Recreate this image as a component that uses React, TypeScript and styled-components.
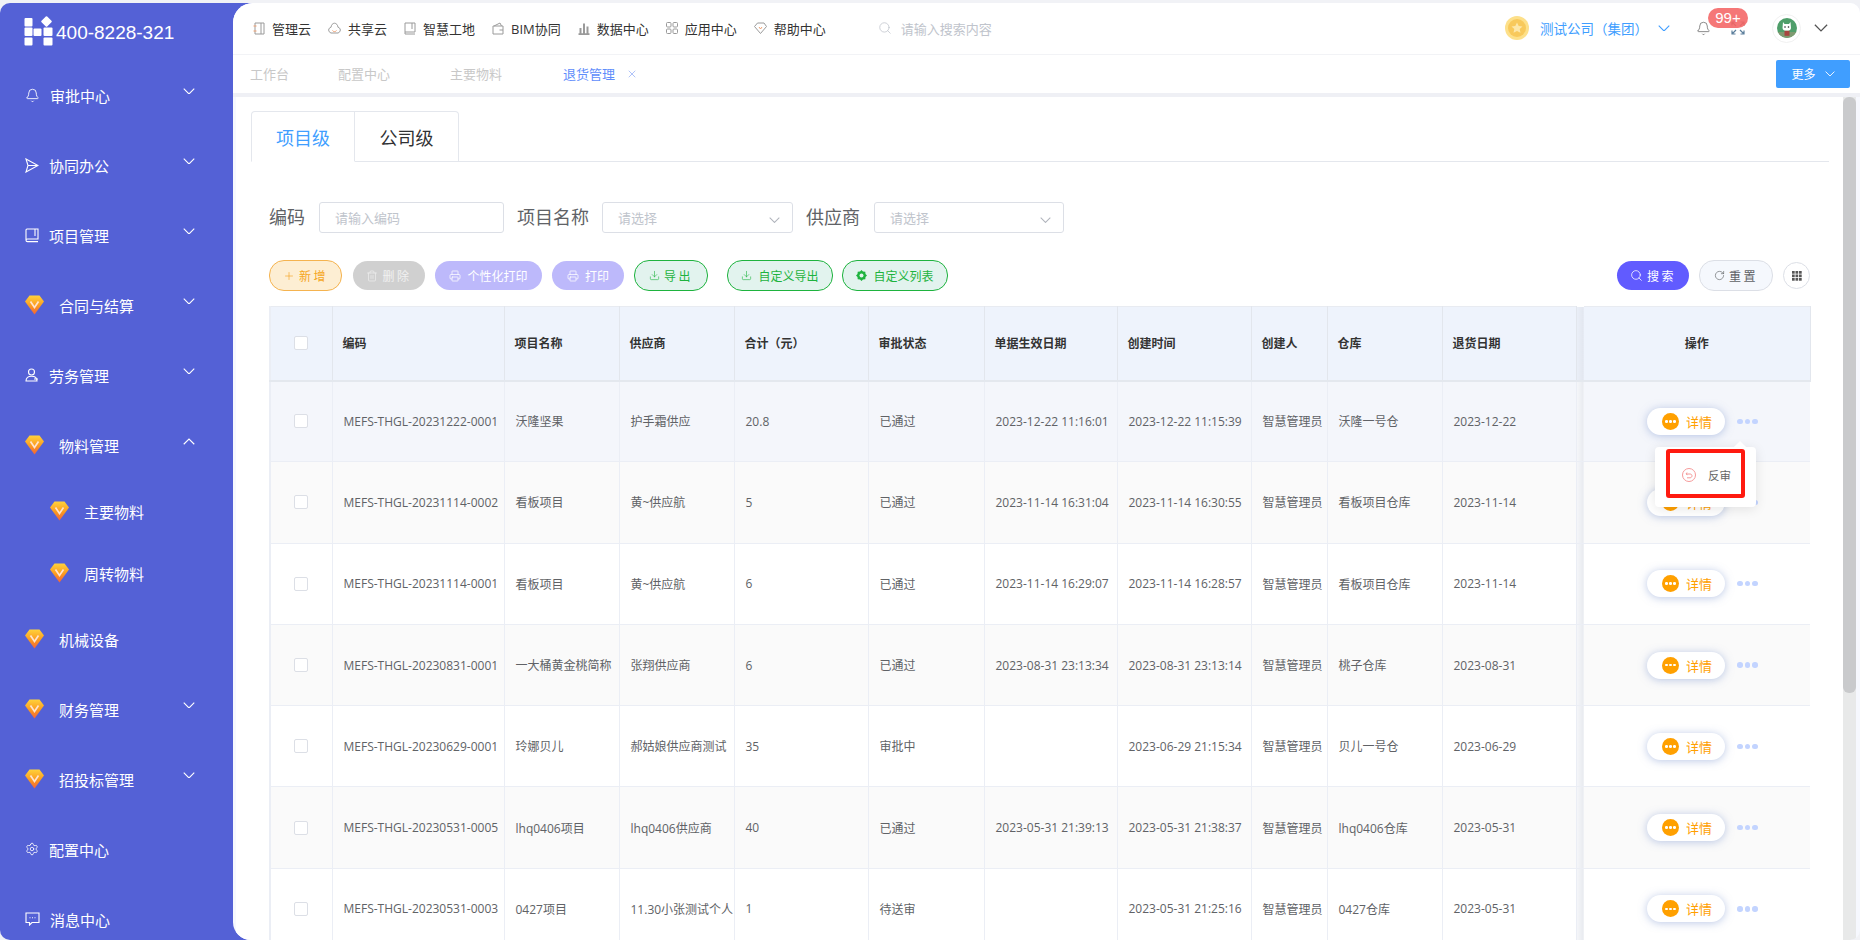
import React from 'react';
import styled, { createGlobalStyle } from 'styled-components';
import { Bell, Settings, Search, RotateCw, Printer, Trash2, Plus, Download, X } from 'lucide-react';

const FONT = '"Open Sans", "Noto Sans CJK SC", sans-serif';

const GlobalStyle = createGlobalStyle`
  html, body {
    margin: 0;
    padding: 0;
    height: 100%;
    overflow: hidden;
    background: #f1f2f6;
    font-family: ${FONT};
  }
  * { box-sizing: border-box; }
`;

const Shell = styled.div`
  width: 1860px;
  height: 937px;
  margin-top: 3px;
  display: flex;
  overflow: hidden;
  border-radius: 10px 0 0 10px;
  background: linear-gradient(90deg, #5461d6 260px, #f1f2f6 260px);
`;

/* sidebar */
const Sidebar = styled.aside`
  width: 233px;
  flex: none;
  color: #fff;
`;

const LogoBar = styled.div`
  height: 57px;
  display: flex;
  align-items: flex-start;
  padding: 13px 0 0 24px;
  gap: 3px;
`;

const Phone = styled.div`
  font-family: "Liberation Sans", sans-serif;
  font-size: 19px;
  line-height: 30px;
  margin-top: 2px;
  color: #fff;
`;

const MenuItem = styled.div<{ $sub?: boolean; $gem?: boolean }>`
  height: ${(p) => (p.$sub ? 62 : 70)}px;
  display: flex;
  align-items: center;
  font-size: 15px;
  padding-left: ${(p) => (p.$sub ? 50 : 25)}px;
  gap: ${(p) => (p.$gem ? 15 : 10)}px;
`;

const MenuLabel = styled.span`
  flex: 1;
`;

const MenuChevron = styled.span`
  display: flex;
  width: 12px;
  margin-right: 38px;
  margin-top: -8px;
`;

const ChevronSvg = styled.svg<{ $up?: boolean }>`
  display: block;
  transform: ${(p) => (p.$up ? 'rotate(180deg)' : 'none')};
`;

const Chevron = ({ up, size = 12, color = '#fff' }: { up?: boolean; size?: number; color?: string }) => (
  <ChevronSvg $up={up} width={size} height={size * 0.58} viewBox="0 0 12 7" fill="none" stroke={color} strokeWidth="1.1">
    <polyline points="0.7,0.7 6,6 11.3,0.7" />
  </ChevronSvg>
);

const Gem = () => {
  const id = React.useId();
  return (
    <svg width="19" height="20" viewBox="0 0 19 20">
      <defs>
        <linearGradient id={id} x1="0" y1="0" x2="0" y2="1">
          <stop offset="0" stopColor="#ffd23c" />
          <stop offset="0.55" stopColor="#fb9a1f" />
          <stop offset="1" stopColor="#f2623b" />
        </linearGradient>
      </defs>
      <path d="M4.5 0.5H14.5L19 6.5L9.5 19.5L0 6.5Z" fill={`url(#${id})`} />
      <polyline points="5.5,6.5 9.5,12.5 13.5,6.5" fill="none" stroke="#ffe3cf" strokeWidth="1.7" />
    </svg>
  );
};

const PlaneIcon = () => (
  <svg width="14" height="15" viewBox="0 0 14 15" fill="none" stroke="#fff" strokeWidth="1.1">
    <path d="M1 1L13 7.5L1 14L3 7.5ZM3 7.5H13" />
  </svg>
);

const BookIcon = () => (
  <svg width="14" height="15" viewBox="0 0 14 15" fill="none" stroke="#fff" strokeWidth="1.1">
    <path d="M1 12V2C1 1.4 1.4 1 2 1H13V11H2.5C1.6 11 1 11.5 1 12.3S1.6 13.6 2.5 13.6H13M10 1V8" />
  </svg>
);

const ChatIcon = () => (
  <svg width="15" height="14" viewBox="0 0 15 14" fill="none" stroke="#fff" strokeWidth="1.1">
    <path d="M1 1H14V10.5H7L4.5 13V10.5H1Z" />
    <path d="M4.5 5.8H5.5M7 5.8H8M9.5 5.8H10.5" />
  </svg>
);

const Logo = () => (
  <svg width="29" height="30" viewBox="0 0 29 30" fill="#fff">
    <rect x="0.5" y="2" width="8" height="8.5" rx="1" />
    <rect x="18.5" y="1.5" width="8" height="8" rx="1" transform="rotate(45 22.5 5.5)" />
    <rect x="0.5" y="11.5" width="8" height="8.5" rx="1" />
    <rect x="9.5" y="12.5" width="8" height="7.5" rx="1" />
    <rect x="19.5" y="11.5" width="9" height="8.5" rx="1" />
    <rect x="0.5" y="21.5" width="8" height="8" rx="1" />
    <rect x="19.5" y="21.5" width="9" height="8" rx="1" />
  </svg>
);

/* main panel */
const Main = styled.main`
  flex: 1;
  min-width: 0;
  display: flex;
  flex-direction: column;
  overflow: hidden;
  border-radius: 20px 10px 10px 18px;
  background: #f6f8fe;
`;

const Header = styled.header`
  height: 52px;
  flex: none;
  display: flex;
  align-items: center;
  background: #fff;
  border-bottom: 1px solid #f2f3f6;
  padding: 0 32px 1px 20px;
`;

const NavLink = styled.div`
  display: flex;
  align-items: center;
  gap: 7px;
  margin-right: 17px;
  font-size: 13px;
  color: #333;
  white-space: nowrap;
`;

const HeaderSearch = styled.div`
  display: flex;
  align-items: center;
  gap: 9px;
  margin-left: 35px;
  font-size: 13px;
  color: #c0c4cc;
`;

const HeaderRight = styled.div`
  margin-left: auto;
  display: flex;
  align-items: center;
`;

const Company = styled.div`
  display: flex;
  align-items: center;
  font-size: 13.5px;
  color: #409eff;
  gap: 11px;
  text-spacing-trim: space-all;
`;

const CompanyChevron = styled.span`
  margin-left: -1px;
  margin-right: 26px;
  display: flex;
`;

const BellWrap = styled.div`
  width: 76px;
  height: 24px;
  position: relative;
  display: flex;
  align-items: center;
  justify-content: space-between;
  padding-right: 27px;
`;

const Badge = styled.span`
  position: absolute;
  left: 12px;
  top: -8px;
  width: 40px;
  height: 20px;
  border-radius: 10px;
  background: #f56c6c;
  color: #fff;
  font-family: "Liberation Sans", sans-serif;
  font-size: 15px;
  line-height: 20px;
  text-align: center;
  opacity: 0.92;
`;

const Avatar = styled.div`
  width: 29px;
  height: 29px;
  border-radius: 50%;
  border: 1px solid #f0f0f0;
  display: flex;
  align-items: center;
  justify-content: center;
  margin-right: 13px;
`;

const TabBar = styled.div`
  height: 42px;
  flex: none;
  display: flex;
  align-items: center;
  background: #fff;
  border-bottom: 4px solid #eff0f5;
  padding: 0 10px 0 17px;
  font-size: 13px;
  color: #c8c8c8;
`;

const Crumb = styled.span<{ $active?: boolean; $w: number }>`
  width: ${(p) => p.$w}px;
  margin-top: -2px;
  color: ${(p) => (p.$active ? '#5f8dfb' : '#c8c8c8')};
  white-space: nowrap;
`;

const CloseWrap = styled.span`
  display: flex;
  margin-left: -3px;
  margin-top: -1px;
`;

const MoreButton = styled.button`
  margin-left: auto;
  width: 74px;
  height: 28px;
  border: none;
  border-radius: 2px;
  background: #409eff;
  color: #fff;
  font-family: ${FONT};
  font-size: 12px;
  display: flex;
  align-items: center;
  justify-content: center;
  gap: 9px;
`;

const Body = styled.div`
  flex: 1;
  min-height: 0;
  display: flex;
  padding-right: 4px;
`;

const Content = styled.div`
  flex: 1;
  min-width: 0;
  margin-left: 3px;
  background: #fff;
  padding: 14px 14px 0 15px;
  overflow: hidden;
`;

const Scrollbar = styled.div`
  width: 13px;
  flex: none;
  background: #e8e9e9;
`;

const ScrollThumb = styled.div`
  height: 596px;
  background: #c9cacc;
  border-radius: 6px;
`;

const TabsHead = styled.div`
  height: 51px;
  display: flex;
  border-bottom: 1px solid #e4e7ed;
`;

const Tab = styled.div<{ $active?: boolean }>`
  width: 104px;
  height: 51px;
  display: flex;
  align-items: center;
  justify-content: center;
  font-size: 18px;
  color: ${(p) => (p.$active ? '#409eff' : '#303133')};
  border: 1px solid #e4e7ed;
  border-left-width: ${(p) => (p.$active ? 1 : 0)}px;
  border-bottom-color: ${(p) => (p.$active ? '#fff' : '#e4e7ed')};
  border-radius: ${(p) => (p.$active ? '4px 0 0 0' : '0 4px 0 0')};
`;

const FilterRow = styled.div`
  display: flex;
  align-items: center;
  height: 31px;
  margin: 40px 0 0 18px;
`;

const FilterLabel = styled.label<{ $gap: number }>`
  font-size: 18px;
  color: #606266;
  margin-right: ${(p) => p.$gap}px;
  margin-top: -3px;
  white-space: nowrap;
`;

const Field = styled.div<{ $w: number; $gap: number }>`
  width: ${(p) => p.$w}px;
  height: 31px;
  margin-right: ${(p) => p.$gap}px;
  border: 1px solid #dcdfe6;
  border-radius: 3px;
  display: flex;
  align-items: center;
  justify-content: space-between;
  padding: 0 12px 1px 15px;
  font-size: 13px;
  color: #c0c4cc;
`;

const FieldChevron = styled.span`
  display: flex;
  margin-top: 6px;
`;

const ActionRow = styled.div`
  display: flex;
  align-items: center;
  height: 31px;
  margin: 27px 19px 0 18px;
`;

const SKINS: Record<string, string> = {
  orange: 'background:#fdeed3;border:1px solid #f5b34f;color:#f5a623;',
  gray: 'background:#d0d0d0;color:#f1f1f1;height:29px;',
  violet: 'background:#bdb9fb;color:#fff;height:29px;',
  green: 'background:#e2f3ee;border:1px solid #1eb33e;color:#1eb33e;',
  blue: 'background:#615bff;color:#fff;height:29px;',
  plain: 'background:#f5f8fd;border:1px solid #dcdfe6;color:#606266;',
};

const PillButton = styled.button<{ $skin: string; $w: number; $gap: number; $spaced?: boolean }>`
  width: ${(p) => p.$w}px;
  height: 31px;
  flex: none;
  margin-right: ${(p) => p.$gap}px;
  padding: 0;
  border: none;
  border-radius: 15px;
  font-family: ${FONT};
  font-size: 12px;
  letter-spacing: ${(p) => (p.$spaced ? 2.5 : 0)}px;
  display: flex;
  align-items: center;
  justify-content: center;
  gap: ${(p) => (p.$spaced ? 4 : 6)}px;
  ${(p) => SKINS[p.$skin]}
`;

const Spacer = styled.div`
  flex: 1;
`;

const GridButton = styled.button`
  width: 27px;
  height: 27px;
  flex: none;
  padding: 0;
  border: 1px solid #dcdfe6;
  border-radius: 50%;
  background: #fff;
  display: flex;
  align-items: center;
  justify-content: center;
`;

/* table */
const TableWrap = styled.div`
  margin: 15px 33px 0 18px;
`;

const Table = styled.table`
  width: 1540px;
  table-layout: fixed;
  border-collapse: collapse;
  font-size: 12px;
  color: #606266;
  border-left: 2px solid #ebeef5;
  text-spacing-trim: space-all;
`;

const Th = styled.th<{ $center?: boolean }>`
  height: 74px;
  background: #eef3fc;
  color: #333;
  font-weight: 700;
  text-align: ${(p) => (p.$center ? 'center' : 'left')};
  padding: 0 ${(p) => (p.$center ? 0 : 10)}px;
  border-top: 1px solid #e8ebf1;
  border-right: 1px solid #e2e6ed;
  border-bottom: 2px solid #e4e8ee;
  white-space: nowrap;
`;

const Row = styled.tr<{ $tone: string }>`
  height: 81.3px;
  background: ${(p) => p.$tone};
`;

const Td = styled.td`
  padding: 0 0 0 11px;
  border-right: 1px solid #ebeef5;
  border-bottom: 1px solid #ebeef5;
  white-space: nowrap;
  overflow: hidden;
`;

const CheckCell = styled.td`
  padding: 0;
  border-right: 1px solid #ebeef5;
  border-bottom: 1px solid #ebeef5;
`;

const CheckHead = styled(Th)`
  padding: 0;
`;

const Box = styled.span`
  display: block;
  width: 14px;
  height: 14px;
  margin: 0 auto;
  background: #fff;
  border: 1px solid #dcdfe6;
  border-radius: 2px;
`;

const BandHead = styled.th`
  padding: 0;
  background: linear-gradient(90deg, #eaeff8, #e2e6ef);
  border-bottom: 2px solid #e4e8ee;
`;

const BandCell = styled.td`
  padding: 0;
  background: linear-gradient(90deg, #f6f7fa, #e8eaef);
  border-bottom: 1px solid #ebeef5;
`;

const OpsCell = styled.td`
  position: relative;
  padding: 0 0 0 63px;
  border-bottom: 1px solid #ebeef5;
`;

const OpsInner = styled.div`
  display: flex;
  align-items: center;
  gap: 12px;
`;

const DetailButton = styled.div`
  width: 78px;
  height: 27px;
  border-radius: 14px;
  background: #fff;
  box-shadow: 0 1px 8px rgba(120, 145, 205, 0.5);
  display: flex;
  align-items: center;
  padding-left: 15px;
  gap: 7px;
  font-size: 13px;
  color: #ffa000;
`;

const DotCircle = styled.span`
  width: 17px;
  height: 17px;
  border-radius: 50%;
  background: #ffa000;
  display: flex;
  align-items: center;
  justify-content: center;
  gap: 1.5px;
`;

const TinyDot = styled.i`
  width: 2.5px;
  height: 2.5px;
  border-radius: 50%;
  background: #fff;
`;

const MoreDots = styled.div`
  display: flex;
  gap: 2px;
`;

const MoreDot = styled.i`
  width: 5.5px;
  height: 5.5px;
  border-radius: 50%;
  background: #c3d4ff;
`;

const Popover = styled.div`
  position: absolute;
  z-index: 5;
  left: 71px;
  top: 65px;
  width: 101px;
  height: 60px;
  background: #fff;
  border-radius: 4px;
  box-shadow: 0 2px 12px rgba(0, 0, 0, 0.1);
  padding: 2px 0 0 11px;

  &::before {
    content: '';
    position: absolute;
    left: 80px;
    top: -4px;
    width: 10px;
    height: 10px;
    background: #fff;
    transform: rotate(45deg);
  }
`;

const RedFrame = styled.div`
  position: relative;
  width: 79px;
  height: 49px;
  border: 4px solid #ff1a10;
  border-radius: 3px;
  display: flex;
  align-items: center;
  padding: 4px 0 0 12px;
  gap: 12px;
  font-size: 11.5px;
  color: #666;
`;

const AvatarPic = styled.svg`
  border-radius: 50%;
`;

const COLS = [62, 172, 115, 115, 134, 116, 133, 134, 76, 115, 134, 8, 226];
const HEADS = ['编码', '项目名称', '供应商', '合计（元）', '审批状态', '单据生效日期', '创建时间', '创建人', '仓库', '退货日期'];

const ROWS = [
  ['MEFS-THGL-20231222-0001', '沃隆坚果', '护手霜供应', '20.8', '已通过', '2023-12-22 11:16:01', '2023-12-22 11:15:39', '智慧管理员', '沃隆一号仓', '2023-12-22'],
  ['MEFS-THGL-20231114-0002', '看板项目', '黄~供应航', '5', '已通过', '2023-11-14 16:31:04', '2023-11-14 16:30:55', '智慧管理员', '看板项目仓库', '2023-11-14'],
  ['MEFS-THGL-20231114-0001', '看板项目', '黄~供应航', '6', '已通过', '2023-11-14 16:29:07', '2023-11-14 16:28:57', '智慧管理员', '看板项目仓库', '2023-11-14'],
  ['MEFS-THGL-20230831-0001', '一大桶黄金桃简称', '张翔供应商', '6', '已通过', '2023-08-31 23:13:34', '2023-08-31 23:13:14', '智慧管理员', '桃子仓库', '2023-08-31'],
  ['MEFS-THGL-20230629-0001', '玲娜贝儿', '郝姑娘供应商测试', '35', '审批中', '', '2023-06-29 21:15:34', '智慧管理员', '贝儿一号仓', '2023-06-29'],
  ['MEFS-THGL-20230531-0005', 'lhq0406项目', 'lhq0406供应商', '40', '已通过', '2023-05-31 21:39:13', '2023-05-31 21:38:37', '智慧管理员', 'lhq0406仓库', '2023-05-31'],
  ['MEFS-THGL-20230531-0003', '0427项目', '11.30小张测试个人', '1', '待送审', '', '2023-05-31 21:25:16', '智慧管理员', '0427仓库', '2023-05-31'],
];

const TONES = ['#f4f6fb', '#fafafa', '#fff', '#fafafa', '#fff', '#fafafa', '#fff'];

const MENU = [
  { label: '审批中心', icon: <Bell size={15} strokeWidth={1.4} />, more: true },
  { label: '协同办公', icon: <PlaneIcon />, more: true },
  { label: '项目管理', icon: <BookIcon />, more: true },
  { label: '合同与结算', gem: true, more: true },
  { label: '劳务管理', icon: <UserIcon />, more: true },
  { label: '物料管理', gem: true, more: true, up: true },
  { label: '主要物料', gem: true, sub: true },
  { label: '周转物料', gem: true, sub: true },
  { label: '机械设备', gem: true },
  { label: '财务管理', gem: true, more: true },
  { label: '招投标管理', gem: true, more: true },
  { label: '配置中心', icon: <Settings size={14} strokeWidth={1.4} /> },
  { label: '消息中心', icon: <ChatIcon /> },
];

function UserIcon() {
  return (
    <svg width="14" height="14" viewBox="0 0 14 14" fill="none" stroke="#fff" strokeWidth="1.1">
      <circle cx="6.5" cy="4" r="3" />
      <path d="M1 13C1 9.8 3.2 8.2 6.5 8.2S12 9.8 12 13ZM9 11H13" />
    </svg>
  );
}

const NAV_STROKE = { fill: 'none', stroke: '#9a9a9a', strokeWidth: 1 };

const NAV = [
  { label: '管理云', icon: <svg width="12" height="13" viewBox="0 0 12 13" {...NAV_STROKE}><path d="M2 1H11V12H2ZM8 1V12" /><path d="M0.5 4H3.5M0.5 9H3.5" stroke="#f0a070" /></svg> },
  { label: '共享云', icon: <svg width="13" height="13" viewBox="0 0 13 13" {...NAV_STROKE}><path d="M3 11C1.5 10.5 .7 9.3 .7 8C.7 6.600 1.700 5.500 3 5.300C3.200 3 4.700 1.200 6.500 1.200S9.800 3 10 5.300C11.300 5.500 12.300 6.600 12.300 8C12.300 9.300 11.500 10.500 10 11Z" /><path d="M4.500 8.500C5.500 10 7.500 10 8.500 8.500" stroke="#f0a070" /></svg> },
  { label: '智慧工地', icon: <svg width="12" height="13" viewBox="0 0 12 13" {...NAV_STROKE}><path d="M1 10V1H11V10ZM1 10V12H11M8 1V7" /></svg> },
  { label: 'BIM协同', icon: <svg width="12" height="13" viewBox="0 0 12 13" {...NAV_STROKE}><path d="M1 4H11V12H1ZM2 4L8 1L9.500 4M7.500 8H11" /></svg> },
  { label: '数据中心', icon: <svg width="12" height="13" viewBox="0 0 12 13" {...NAV_STROKE}><path d="M2.500 12V6M6 12V1.500M9.500 12V4.500M.5 12.300H11.500" strokeWidth="2" /></svg> },
  { label: '应用中心', icon: <svg width="12" height="12" viewBox="0 0 12 12" {...NAV_STROKE}><rect x=".5" y=".5" width="4.500" height="4.500" rx="1" /><rect x="7" y=".5" width="4.500" height="4.500" rx="1" /><rect x=".5" y="7" width="4.500" height="4.500" rx="1" /><rect x="7" y="7" width="4.500" height="4.500" rx="1" /></svg> },
  { label: '帮助中心', icon: <svg width="13" height="12" viewBox="0 0 13 12" {...NAV_STROKE}><path d="M3.500 1H10L12.500 4.500L6.500 11.500L.5 4.500Z" /><path d="M5 5L6.500 7L8 5" stroke="#f0a070" /></svg> },
];

const Coin = () => (
  <svg width="24" height="24" viewBox="0 0 24 24">
    <circle cx="12" cy="12" r="12" fill="#fde08a" />
    <circle cx="12" cy="12" r="9" fill="#f8c95c" />
    <path d="M12 6.500L13.700 10L17.500 10.500L14.700 13L15.500 16.800L12 15L8.500 16.800L9.300 13L6.500 10.500L10.300 10Z" fill="#fde7a9" />
  </svg>
);

const Cat = () => (
  <AvatarPic width="20" height="20" viewBox="0 0 20 20">
    <rect width="20" height="20" fill="#4f9e6a" />
    <rect y="14" width="20" height="6" fill="#7f9a70" />
    <path d="M6 4L7.500 6H12L13.500 4L14 10C14 12 12 12.800 9.800 12.800S5.500 12 5.500 10Z" fill="#fff" />
    <rect x="7.500" y="12.800" width="5" height="5" fill="#a8453f" />
    <circle cx="8" cy="9" r=".8" fill="#222" />
    <circle cx="11.500" cy="9" r=".8" fill="#222" />
  </AvatarPic>
);

const FullscreenIcon = () => (
  <svg width="14" height="14" viewBox="0 0 14 14" fill="none" stroke="#444" strokeWidth="1.2">
    <path d="M1 4.500V1H4.500M1 1L5 5M13 4.500V1H9.500M13 1L9 5" />
    <path d="M1 9.500V13H4.500M1 13L5 9M13 9.500V13H9.500M13 13L9 9" stroke="#5c7f9c" />
  </svg>
);

const GridIcon = () => (
  <svg width="10" height="10" viewBox="0 0 10 10" fill="#555">
    {[0, 3.500, 7].map((y) => [0, 3.500, 7].map((x) => <rect key={`${x}-${y}`} x={x} y={y} width="2.700" height="2.700" />))}
  </svg>
);

const GearIcon = () => (
  <svg width="11" height="11" viewBox="0 0 11 11">
    <path d="M5.500 0L7 1.500L9.300 1.700L9.500 4L11 5.500L9.500 7L9.300 9.300L7 9.500L5.500 11L4 9.500L1.700 9.300L1.500 7L0 5.500L1.500 4L1.700 1.700L4 1.500Z" fill="#1eb33e" />
    <circle cx="5.500" cy="5.500" r="2" fill="#e2f3ee" />
  </svg>
);

const UndoIcon = () => (
  <svg width="14" height="14" viewBox="0 0 14 14" fill="none" stroke="#f59a9a" strokeWidth="1">
    <circle cx="7" cy="7" r="6.500" />
    <path d="M5 4.500L4 6L5.500 6.700M4 6H8C9.200 6 10 6.800 10 7.800S9.200 9.800 8 9.800H5" />
  </svg>
);

const Detail = () => (
  <OpsInner>
    <DetailButton>
      <DotCircle>
        <TinyDot />
        <TinyDot />
        <TinyDot />
      </DotCircle>
      详情
    </DetailButton>
    <MoreDots>
      <MoreDot />
      <MoreDot />
      <MoreDot />
    </MoreDots>
  </OpsInner>
);

const App = () => {
  return (
    <>
      <GlobalStyle />
      <Shell>
        <Sidebar>
          <LogoBar>
            <Logo />
            <Phone>400-8228-321</Phone>
          </LogoBar>
          {MENU.map((m) => (
            <MenuItem key={m.label} $sub={m.sub} $gem={m.gem}>
              {m.gem ? <Gem /> : m.icon}
              <MenuLabel>{m.label}</MenuLabel>
              {m.more && (
                <MenuChevron>
                  <Chevron up={m.up} />
                </MenuChevron>
              )}
            </MenuItem>
          ))}
        </Sidebar>
        <Main>
          <Header>
            {NAV.map((n) => (
              <NavLink key={n.label}>
                {n.icon}
                {n.label}
              </NavLink>
            ))}
            <HeaderSearch>
              <Search size={14} color="#c0c4cc" strokeWidth={1.3} />
              请输入搜索内容
            </HeaderSearch>
            <HeaderRight>
              <Company>
                <Coin />
                测试公司（集团）
                <CompanyChevron>
                  <Chevron color="#409eff" />
                </CompanyChevron>
              </Company>
              <BellWrap>
                <Bell size={15} color="#666" strokeWidth={1.2} />
                <FullscreenIcon />
                <Badge>99+</Badge>
              </BellWrap>
              <Avatar>
                <Cat />
              </Avatar>
              <Chevron size={14} color="#555" />
            </HeaderRight>
          </Header>
          <TabBar>
            <Crumb $w={88}>工作台</Crumb>
            <Crumb $w={112}>配置中心</Crumb>
            <Crumb $w={113}>主要物料</Crumb>
            <Crumb $w={66} $active>退货管理</Crumb>
            <CloseWrap>
              <X size={12} color="#7a9bf5" strokeWidth={1.2} />
            </CloseWrap>
            <MoreButton>
              更多
              <Chevron size={10} />
            </MoreButton>
          </TabBar>
          <Body>
            <Content>
              <TabsHead>
                <Tab $active>项目级</Tab>
                <Tab>公司级</Tab>
              </TabsHead>
              <FilterRow>
                <FilterLabel $gap={14}>编码</FilterLabel>
                <Field $w={185} $gap={13}>请输入编码</Field>
                <FilterLabel $gap={13}>项目名称</FilterLabel>
                <Field $w={191} $gap={13}>
                  请选择
                  <FieldChevron><Chevron size={11} color="#b0b4bc" /></FieldChevron>
                </Field>
                <FilterLabel $gap={14}>供应商</FilterLabel>
                <Field $w={190} $gap={0}>
                  请选择
                  <FieldChevron><Chevron size={11} color="#b0b4bc" /></FieldChevron>
                </Field>
              </FilterRow>
              <ActionRow>
                <PillButton $skin="orange" $w={73} $gap={11} $spaced><Plus size={12} strokeWidth={1.3} />新增</PillButton>
                <PillButton $skin="gray" $w={72} $gap={10} $spaced><Trash2 size={12} strokeWidth={1.3} />删除</PillButton>
                <PillButton $skin="violet" $w={107} $gap={10}><Printer size={12} strokeWidth={1.5} />个性化打印</PillButton>
                <PillButton $skin="violet" $w={72} $gap={10}><Printer size={12} strokeWidth={1.5} />打印</PillButton>
                <PillButton $skin="green" $w={74} $gap={19} $spaced><Download size={11} strokeWidth={1.3} />导出</PillButton>
                <PillButton $skin="green" $w={106} $gap={9}><Download size={11} strokeWidth={1.3} />自定义导出</PillButton>
                <PillButton $skin="green" $w={106} $gap={0}><GearIcon />自定义列表</PillButton>
                <Spacer />
                <PillButton $skin="blue" $w={72} $gap={10} $spaced><Search size={13} strokeWidth={1.4} />搜索</PillButton>
                <PillButton $skin="plain" $w={74} $gap={10} $spaced><RotateCw size={11} strokeWidth={1.4} />重置</PillButton>
                <GridButton><GridIcon /></GridButton>
              </ActionRow>
              <TableWrap>
                <Table>
                  <colgroup>
                    {COLS.map((w, i) => (
                      <col key={i} width={w} />
                    ))}
                  </colgroup>
                  <thead>
                    <tr>
                      <CheckHead><Box /></CheckHead>
                      {HEADS.map((h) => (
                        <Th key={h}>{h}</Th>
                      ))}
                      <BandHead />
                      <Th $center>操作</Th>
                    </tr>
                  </thead>
                  <tbody>
                    {ROWS.map((r, i) => (
                      <Row key={r[0]} $tone={TONES[i]}>
                        <CheckCell><Box /></CheckCell>
                        {r.map((c, j) => (
                          <Td key={j}>{c}</Td>
                        ))}
                        <BandCell />
                        <OpsCell>
                          <Detail />
                          {i === 0 && (
                            <Popover>
                              <RedFrame>
                                <UndoIcon />
                                反审
                              </RedFrame>
                            </Popover>
                          )}
                        </OpsCell>
                      </Row>
                    ))}
                  </tbody>
                </Table>
              </TableWrap>
            </Content>
            <Scrollbar>
              <ScrollThumb />
            </Scrollbar>
          </Body>
        </Main>
      </Shell>
    </>
  );
};

export default App;
